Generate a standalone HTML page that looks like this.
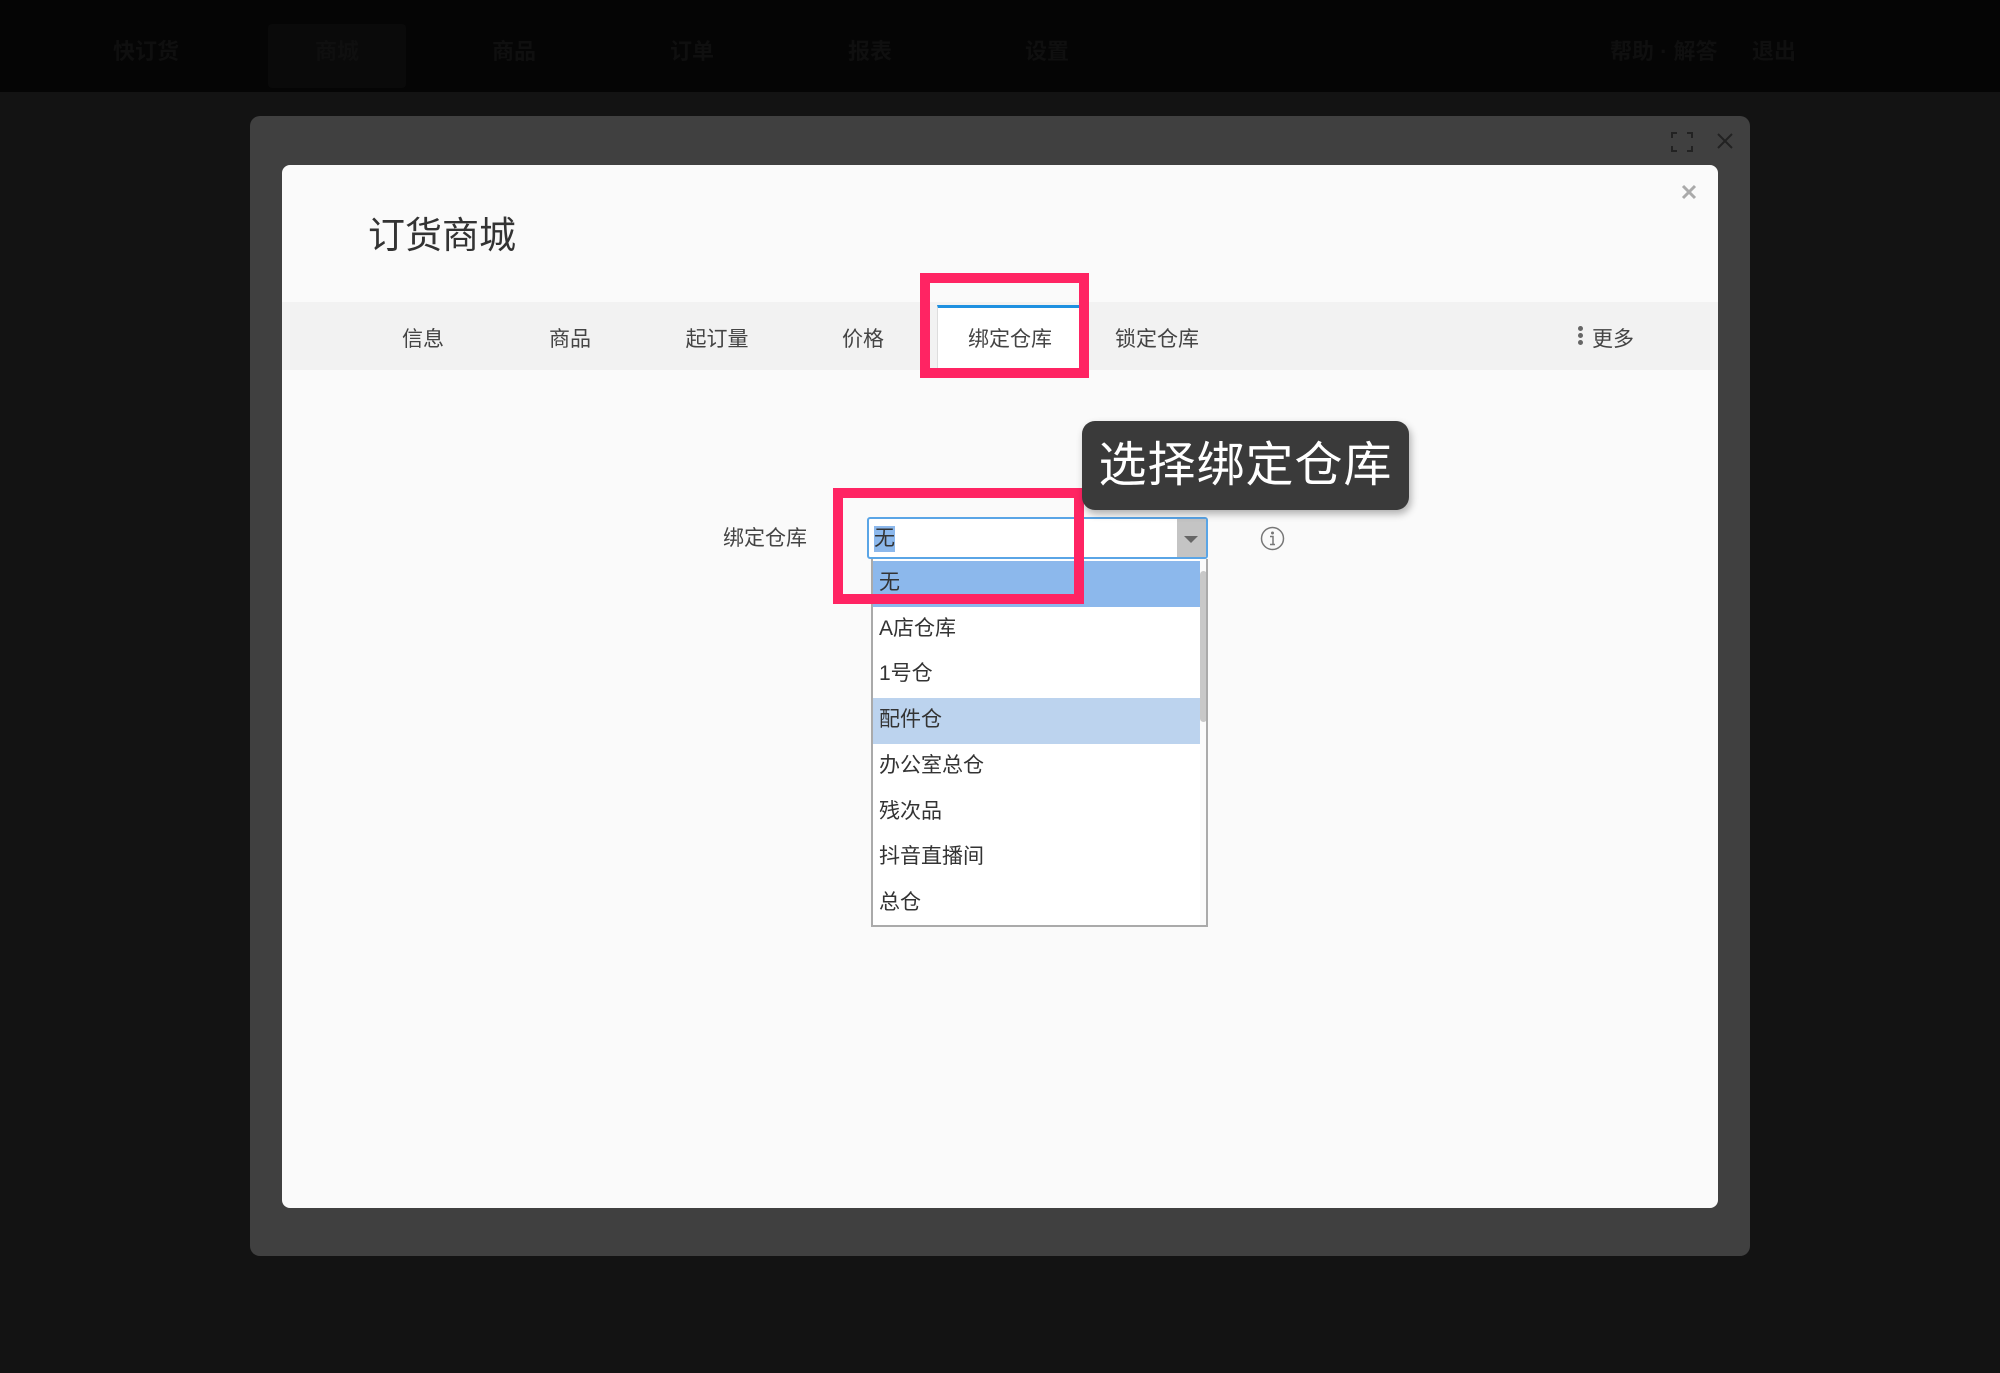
<!DOCTYPE html>
<html><head><meta charset="utf-8"><style>
*{margin:0;padding:0;box-sizing:border-box}
body{width:2000px;height:1373px;background:#131313;position:relative;overflow:hidden;font-family:"Liberation Sans","Noto Sans CJK SC",sans-serif}
.abs{position:absolute}
.nav{left:0;top:0;width:2000px;height:92px;background:#050505}
.navt{color:#0f0f0f;font-size:22px;font-weight:bold;top:34px}
.outer{left:250px;top:116px;width:1500px;height:1140px;background:#404040;border-radius:10px}
.inner{left:282px;top:165px;width:1436px;height:1043px;background:#fafafa;border-radius:8px;overflow:hidden}
.tabbar{left:0;top:137px;width:1436px;height:68px;background:#f2f2f2}
.tab{font-size:21px;color:#444;top:21px;transform:translateX(-50%);white-space:nowrap}
.item{left:0;width:327px;height:45.7px;font-size:21px;color:#333;padding-left:6px;line-height:44px}
</style></head><body>
<div class="abs nav"></div>
<div class="abs" style="left:268px;top:24px;width:138px;height:64px;background:#0a0a0a;border-radius:4px"></div>
<div class="abs navt" style="left:113px">快订货</div>
<div class="abs navt" style="left:315px">商城</div>
<div class="abs navt" style="left:492px">商品</div>
<div class="abs navt" style="left:670px">订单</div>
<div class="abs navt" style="left:848px">报表</div>
<div class="abs navt" style="left:1025px">设置</div>
<div class="abs navt" style="left:1610px">帮助 · 解答</div>
<div class="abs navt" style="left:1752px">退出</div>

<div class="abs outer">
  <svg class="abs" style="left:1421px;top:16px" width="22" height="20" viewBox="0 0 22 20" fill="none" stroke="#222" stroke-width="2"><path d="M1 6V1h5M16 1h5v5M21 14v5h-5M6 19H1v-5"/></svg>
  <svg class="abs" style="left:1467px;top:17px" width="16" height="16" viewBox="0 0 16 16" stroke="#222" stroke-width="2"><path d="M1 1L15 15M15 1L1 15"/></svg>
</div>

<div class="abs inner">
  <svg class="abs" style="left:1399px;top:19px" width="16" height="16" viewBox="0 0 16 16" stroke="#aaa" stroke-width="3"><path d="M2 2L14 14M14 2L2 14"/></svg>
  <div class="abs" style="left:86px;top:40px;font-size:37px;color:#333">订货商城</div>
  <div class="abs tabbar">
    <div class="abs" style="left:655px;top:3px;width:143px;height:65px;background:#fff;border-top:3px solid #1e90e0;border-left:1px solid #ddd"></div>
    <div class="abs tab" style="left:141px">信息</div>
    <div class="abs tab" style="left:288px">商品</div>
    <div class="abs tab" style="left:435px">起订量</div>
    <div class="abs tab" style="left:581px">价格</div>
    <div class="abs tab" style="left:728px">绑定仓库</div>
    <div class="abs tab" style="left:875px">锁定仓库</div>
    <div class="abs" style="left:1296px;top:24px;width:5px">
      <div style="width:5px;height:5px;border-radius:50%;background:#666;margin-bottom:2px"></div>
      <div style="width:5px;height:5px;border-radius:50%;background:#666;margin-bottom:2px"></div>
      <div style="width:5px;height:5px;border-radius:50%;background:#666"></div>
    </div>
    <div class="abs tab" style="left:1331px">更多</div>
  </div>
  <div class="abs" style="left:441px;top:357px;font-size:21px;color:#444">绑定仓库</div>
</div>

<!-- select -->
<div class="abs" style="left:867px;top:517px;width:341px;height:42px;background:#fff;border:2px solid #5aa5e6;border-radius:3px;overflow:hidden">
  <div class="abs" style="right:0;top:0;width:29px;height:40px;background:#c4c4c4"></div>
  <div class="abs" style="right:8px;top:17px;width:0;height:0;border-left:7px solid transparent;border-right:7px solid transparent;border-top:7px solid #666"></div>
  <div class="abs" style="left:5px;top:7px;font-size:21px;color:#333;background:#8cb8ec;line-height:26px">无</div>
</div>
<svg class="abs" style="left:1260px;top:526px" width="25" height="25" viewBox="0 0 25 25"><circle cx="12.5" cy="12.5" r="11" fill="none" stroke="#777" stroke-width="1.5"/><circle cx="12.5" cy="7" r="1.5" fill="#777"/><path d="M10 10.5h3v8M10 18.5h5" stroke="#777" stroke-width="1.5" fill="none"/></svg>

<!-- dropdown list -->
<div class="abs" style="left:871px;top:559px;width:337px;height:368px;background:#fff;border:2px solid #aaa;border-top:none;overflow:hidden">
  <div class="abs item" style="top:2px;background:#8cb8ec">无</div>
  <div class="abs item" style="top:47.7px">A店仓库</div>
  <div class="abs item" style="top:93.4px">1号仓</div>
  <div class="abs item" style="top:139px;background:#bcd3ee">配件仓</div>
  <div class="abs item" style="top:184.8px">办公室总仓</div>
  <div class="abs item" style="top:230.5px">残次品</div>
  <div class="abs item" style="top:276.2px">抖音直播间</div>
  <div class="abs item" style="top:321.9px">总仓</div>
  <div class="abs" style="left:327px;top:0;width:8px;height:368px;background:#fafafa"></div>
  <div class="abs" style="left:327px;top:12px;width:7px;height:151px;background:#c8c8c8;border-radius:4px"></div>
</div>

<!-- pink highlight boxes -->
<div class="abs" style="left:920px;top:273px;width:169px;height:105px;border:10px solid #ff2463"></div>
<div class="abs" style="left:833px;top:488px;width:251px;height:116px;border:10px solid #ff2463"></div>

<!-- tooltip -->
<div class="abs" style="left:1082px;top:421px;width:327px;height:89px;background:#3a3a3a;border-radius:13px;box-shadow:2px 4px 8px rgba(0,0,0,.3);color:#fff;font-size:48px;line-height:89px;text-align:center;letter-spacing:1px">选择绑定仓库</div>
</body></html>
